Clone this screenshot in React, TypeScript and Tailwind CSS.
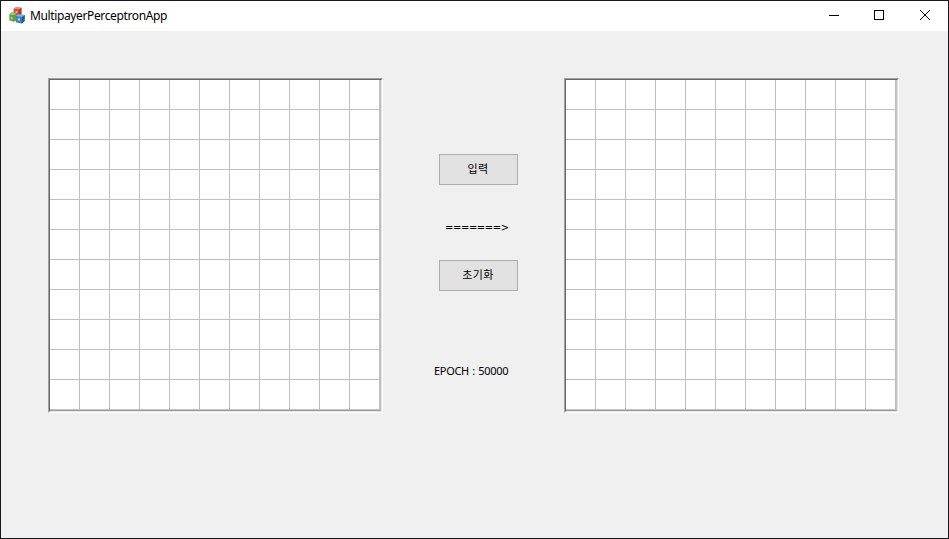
const cells = Array.from({ length: 121 }, (_, i) => i);

function AppIcon() {
  return (
    <svg width="17" height="17" viewBox="0 0 17 17" className="shrink-0">
      <path d="M4.5 2 7 0.3 12.5 0.8 12.3 7.5 9.5 9 4.8 8.2z" fill="#cf4d3b" />
      <path d="M4.5 2 7 0.3 12.5 0.8 10.5 2.2z" fill="#e98c78" />
      <path d="M10.5 2.2 12.5 0.8 12.3 7.5 9.5 9z" fill="#ae3528" />
      <path d="M6.5 4 8.6 4.2 8.4 6.2 6.7 6z" fill="#efb0a4" />
      <path d="M0.3 7.5 3 5 7.3 6.5 7.3 13.5 4.5 14.8 0.3 13.2z" fill="#62a143" />
      <path d="M0.3 7.5 3 5 7.3 6.5 4.5 8.2z" fill="#9cc77f" />
      <path d="M1.8 9.8 3.6 10.2 3.5 12.4 1.9 12z" fill="#b2d59e" />
      <path d="M6.8 9 9.5 7.2 15.9 8 15.5 14.2 12.5 16.5 6.8 15.2z" fill="#3b81ba" />
      <path d="M6.8 9 9.5 7.2 15.9 8 13 9.9z" fill="#84b6dc" />
      <path d="M13 9.9 15.9 8 15.5 14.2 12.5 16.5z" fill="#245f9a" />
      <path d="M8.6 11.2 11 11.6 10.8 13.8 8.8 13.4z" fill="#b5d6ec" />
    </svg>
  );
}

function Grid() {
  return (
    <div className="h-[335px] w-[335px] border border-t-[#a0a0a0] border-l-[#a0a0a0] border-r-white border-b-white">
      <div className="h-[333px] w-[333px] border border-t-[#696969] border-l-[#696969] border-r-[#e3e3e3] border-b-[#e3e3e3]">
        <div className="h-[331px] w-[331px] border-r border-b border-r-[#c0c0c0] border-b-[#a0a0a0] bg-white">
          <div className="grid grid-cols-[repeat(11,30px)] grid-rows-[repeat(11,30px)]">
            {cells.map((i) => (
              <div key={i} className="border-r border-b border-[#c0c0c0]" />
            ))}
          </div>
        </div>
      </div>
    </div>
  );
}

function PushButton({ label }: { label: string }) {
  return (
    <button className="ml-[5px] flex h-[31px] w-[79px] items-center justify-center border border-[#adadad] bg-[#e1e1e1] pr-px pb-[3px] text-[11px] leading-none tracking-[0.3px]">
      {label}
    </button>
  );
}

export default function App() {
  return (
    <div className="flex h-[539px] w-[949px] flex-col border border-[#18161a] bg-[#f0f0f0] font-['Noto_Sans','Noto_Sans_CJK_KR',sans-serif] text-black">
      <header className="flex h-[30px] shrink-0 bg-white">
        <div className="flex flex-1 items-start pt-[6px] pl-2">
          <AppIcon />
          <span className="ml-1 text-[12px] leading-[17px] tracking-[-0.37px] whitespace-nowrap">MultipayerPerceptronApp</span>
        </div>
        <svg width="137" height="30" viewBox="0 0 137 30" fill="none" stroke="#000" shapeRendering="crispEdges">
          <path d="M18 14.5h10" />
          <rect x="63.5" y="9.5" width="9" height="9" />
          <path d="M109 9l10 10M119 9l-10 10" shapeRendering="auto" />
        </svg>
      </header>
      <main className="flex items-start pt-[47px] pl-[47px]">
        <Grid />
        <section className="ml-[51px] flex w-[130px] flex-col pt-[76px]">
          <PushButton label="입력" />
          <p className="mt-[34px] ml-[11px] font-['DejaVu_Sans',sans-serif] text-[10px] leading-[17px] tracking-[-0.42px] whitespace-nowrap">=======&gt;</p>
          <div className="mt-6">
            <PushButton label="초기화" />
          </div>
          <p className="mt-[72px] text-[11px] leading-4 tracking-[-0.3px] [word-spacing:0.8px] whitespace-nowrap">EPOCH : 50000</p>
        </section>
        <Grid />
      </main>
    </div>
  );
}
